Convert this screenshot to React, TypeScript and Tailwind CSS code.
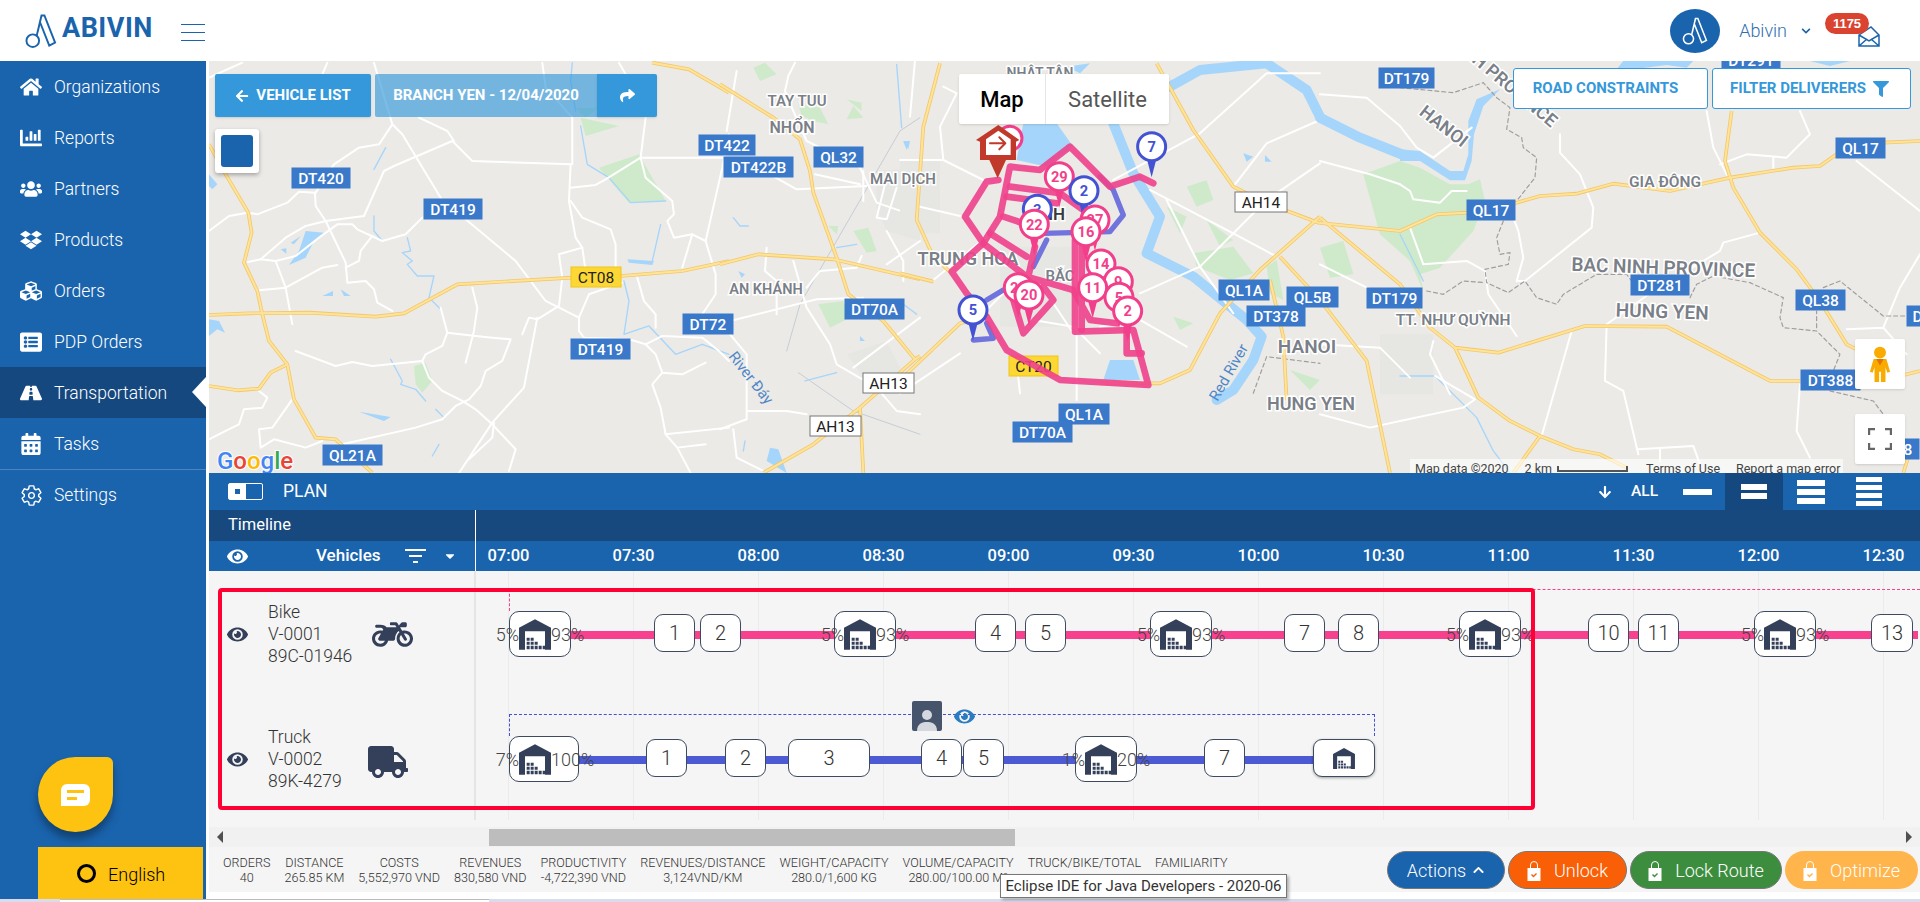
import {
  FaCalendarAlt,
  FaCaretDown,
  FaChartBar,
  FaChevronDown,
  FaChevronUp,
  FaCubes,
  FaDropbox,
  FaEye,
  FaFilter,
  FaHome,
  FaListAlt,
  FaMotorcycle,
  FaRoad,
  FaTruck,
  FaUsers,
  FaArrowLeft,
  FaArrowDown,
  FaShare,
} from "react-icons/fa";
import { IoSettingsOutline } from "react-icons/io5";

const navItems = [
  { label: "Organizations", icon: FaHome },
  { label: "Reports", icon: FaChartBar },
  { label: "Partners", icon: FaUsers },
  { label: "Products", icon: FaDropbox },
  { label: "Orders", icon: FaCubes },
  { label: "PDP Orders", icon: FaListAlt },
  { label: "Transportation", icon: FaRoad, active: true },
  { label: "Tasks", icon: FaCalendarAlt },
];

const stats = [
  ["ORDERS", "40"],
  ["DISTANCE", "265.85 KM"],
  ["COSTS", "5,552,970 VND"],
  ["REVENUES", "830,580 VND"],
  ["PRODUCTIVITY", "-4,722,390 VND"],
  ["REVENUES/DISTANCE", "3,124VND/KM"],
  ["WEIGHT/CAPACITY", "280.0/1,600 KG"],
  ["VOLUME/CAPACITY", "280.00/100.00 M³"],
  ["TRUCK/BIKE/TOTAL", "\u00a0"],
  ["FAMILIARITY", "\u00a0"],
];

const times = ["07:00", "07:30", "08:00", "08:30", "09:00", "09:30", "10:00", "10:30", "11:00", "11:30", "12:00", "12:30"];

// map layers, each drawn in the coordinates of the crop it was traced from
const layers = [
  {
    ox: 209,
    oy: 61,
    water: ["0,340 25,370 10,385 0,375", "290,510 345,515 315,540 290,590 240,612 270,570", "245,545 275,525 255,550", "215,565 232,562 232,578", "340,705 372,690 372,705", "395,685 425,705 405,705", "0,775 30,780 48,815 25,805 0,825", "450,1052 545,1068 525,1080", "1255,595 1335,600 1330,612 1260,605"],
    streams: ["M495 325 L530 260 M495 465 L495 510 L520 540 M595 530 L605 570 L580 575 L610 600 L595 610 L625 645 L675 645 L660 710 L695 745", "M545 895 L580 960 L575 970 L620 985 L650 1020 M680 1045 L705 1070 M690 1150 L670 1185", "M1115 195 L1135 310 L1200 350 L1265 425 L1370 420", "M1355 490 L1330 600 M1245 660 L1260 720 L1245 820 L1320 795 L1400 880 L1480 850 L1560 880", "M1090 5 L1085 60 L1100 150"],
    green: ["615,915 650,905 670,960 640,995 620,970", "1115,170 1230,195 1130,225", "1170,320 1290,280 1370,420 1260,425", "1100,140 1170,140 1130,170"],
    white: [
      "M0 510 L60 465 L115 455 L145 460 L235 425 L270 392 L318 395 L320 435 L350 480 L410 605 L415 665 L470 660 L495 685 L505 725 L550 750",
      "M155 595 L230 530 L290 495 L350 480 L465 465 L525 330 L555 315 L730 240 L790 300 L1085 310",
      "M100 5 L0 50 M355 5 L340 40 M495 5 L550 190 L510 250 L450 260 L375 310 L320 395 M550 190 L580 220 L695 410 M630 170 L715 210 L735 240",
      "M117 603 L155 595 L200 600 L260 585 L330 530 L385 490 L430 490 L445 505 L520 540 L590 520 L640 470",
      "M200 600 L230 680 L250 790 M150 688 L230 680 L340 620 L385 612 M490 525 L455 570 L450 600 L410 620",
      "M770 475 L920 600 L1010 720 L1110 770 L1140 700 L1240 665",
      "M790 680 L805 740 L795 810 L770 905 M715 815 L800 825 L850 830 L905 835 L880 900 L830 930 L815 975 L780 1015 L740 1035 L700 1075 L620 1100 L400 1150",
      "M260 870 L380 915 L430 903 L490 915 L640 900 L660 950 L700 990 L760 1020 L800 1045 L845 1085 L920 1165 L900 1230",
      "M640 900 L650 880 L700 855 L715 815 L695 740 M985 770 L945 980 L850 1085 L750 1236",
      "M940 820 L960 770 L985 775 L1050 735 L1060 650 L1050 580 L1120 560 L1130 630",
      "M1085 310 L1080 420 L1100 530 L1120 560 M1085 380 L1160 372 L1190 355 L1295 290 L1560 290 M1295 290 L1310 170",
      "M1295 290 L1310 350 L1390 420 L1395 460 L1375 480 L1395 530 L1450 520 L1490 540 L1540 320 L1560 220",
      "M1085 420 L1120 470 L1205 505 L1220 550 L1220 640 M1000 5 L1010 80 L1090 170 L1090 310 M1230 5 L1250 40",
      "M1490 540 L1520 640 L1520 700 L1480 760 M1450 520 L1420 620 M1110 770 L1110 810 L1125 830 L1260 835 L1310 850 L1360 825 L1480 830 L1530 870 L1560 900",
      "M1310 850 L1340 880 L1360 935 L1420 940 L1490 905 M1360 935 L1330 970 L1355 1040 L1370 1120 L1405 1160 L1490 1150 M1405 1160 L1445 1236",
      "M0 1135 L50 1110 L90 1090 L105 1045 L160 1040 L175 1010 L150 990 M150 1105 L190 1100 L250 1015 M150 1105 L155 1160 L195 1135 L290 1160 L340 1140",
      "M1285 650 L1305 720 L1340 760 L1340 800 M1370 1120 L1560 1100 M855 1085 L850 1130 L780 1195",
    ],
    yellow: [
      "M0 250 L50 340 L118 455 L128 515 L105 605 L145 690 L160 760 L180 840 L235 910 L255 1015 L320 1130 L380 1135 L490 1236",
      "M0 762 L120 757 L300 755 L500 767 L585 757 L745 670 L1090 650 L1235 645 L1420 630 L1560 600",
      "M0 975 L85 988 L150 983 L185 935 L235 910",
      "M1330 5 L1440 25 L1560 95",
    ],
    dashed: [],
  },
  {
    ox: 720,
    oy: 61,
    water: ["550,240 570,240 565,265", "150,1160 175,1165 200,1236 140,1200", "55,630 75,640 65,650", "420,825 435,840 420,840"],
    streams: ["M40 470 L60 495 L85 495 M75 1140 L70 1170 M530 10 L545 200 M255 960 L350 935 M350 560 L410 550 M550 730 L590 760"],
    green: ["100,20 135,5 170,40 120,60", "235,130 300,140 325,190 280,180 245,165", "380,115 425,125 425,150", "380,175 400,135 430,170", "400,510 445,500 470,570 440,575", "295,730 370,720 390,770 330,800", "325,495 355,495 350,520"],
    urban: ["470,330 600,320 600,540 500,510 470,440", "380,880 500,840 560,960 440,960"],
    white: [
      "M50 30 L20 210 M205 45 L225 5 M205 45 L195 90 L220 150 L260 240 L420 320 L470 425 L600 470",
      "M285 340 L420 370 M150 340 L230 385 L440 375 M430 330 L430 420 M495 370 L470 470 L500 475 L530 380 M500 510 L550 600 L550 660",
      "M140 560 L135 630 L170 660 L170 760 M30 780 L290 715 L430 710 M220 600 L260 740 L330 850 L350 910 L470 980 L530 1050 L600 1060",
      "M400 920 L600 770 M260 680 L300 630 L410 620 L425 585 M500 610 L600 540 M30 820 L80 880 L80 1075 L0 1105 M40 1105 L50 1190 L130 1230 M80 1050 L200 1050 L260 1060",
    ],
    rail: ["M200 870 L240 730 L540 210 L600 170", "M235 935 L400 1050 L600 1120"],
    yellow: [
      "M0 70 L160 170 L240 235 L270 330 L280 395 L350 590 L385 700 L490 780 L585 895",
      "M0 610 L115 580 L340 595 L600 655",
      "M130 1236 L280 1150 L420 1040 L585 895 L600 885",
      "M420 1040 L430 1236",
    ],
    dashed: [],
  },
  {
    ox: 900,
    oy: 60,
    water: ["370,190 470,190 520,260 440,320 350,300", "630,900 700,900 720,960 610,960", "10,245 25,245 20,270", "500,20 570,10 540,40", "1030,280 1060,290 1040,305", "1095,285 1115,305 1095,305"],
    river: ["M640 190 L700 340 L780 470 L740 580 L880 650 L1040 780 L1085 830 L1060 900 L1000 990 L950 1020", "M810 80 L900 30 L1100 10 L1220 90 L1260 170"],
    green: ["860,380 920,360 940,420 890,440", "880,580 1000,560 1060,640 990,660 890,620", "1100,620 1130,600 1150,720 1110,700", "800,440 860,470 840,520", "820,770 880,790 840,810", "920,480 1000,540 960,560", "1170,930 1260,960 1230,990"],
    urban: ["0,300 120,300 120,520 0,520", "300,560 560,560 560,800 300,800"],
    white: [
      "M0 300 L130 300 L190 330 L250 360 M130 300 L120 200 L170 100 L130 80 M190 470 L60 440 M100 660 L260 530 M210 800 L360 650 M0 1000 L180 880 M180 790 L100 870",
      "M350 910 L360 1000 M530 540 L530 1020 M400 780 L520 800 L600 880 M640 360 L900 220 L1100 40 L1260 40 M750 390 L1000 520 L1130 590",
      "M720 700 L900 620 L1100 420 L1260 310 M1000 380 L1100 250 L1260 180 M800 420 L900 620 L1000 760 M45 0 L30 170 M440 700 L520 820 M600 800 L720 780 L860 860",
    ],
    yellow: [
      "M120 10 L70 200 L50 480 L100 590 L155 640",
      "M0 640 L100 665",
      "M0 960 L180 790 L270 770",
      "M770 10 L880 210 L1000 380 L1100 430 L1260 490",
      "M1260 470 L1080 630 L960 760 L870 930 L780 970 L600 970",
      "M1140 590 L1260 720 M1110 660 L1150 830 L1160 1020",
    ],
    dashed: ["M1060 1000 L1100 890 L1260 910"],
  },
  {
    ox: 1400,
    oy: 61,
    water: ["0,265 60,270 150,330 190,330 205,280 205,180 230,115 300,85 250,135 222,220 215,300 195,358 150,358 60,300 0,300", "650,25 670,0 880,0 860,20 800,12 700,25", "1230,0 1350,0 1290,15"],
    river: ["M-240 170 L-120 230 L10 282"],
    streams: ["M0 520 L70 660 M0 945 L105 945 L230 1070 L280 1170 L330 1236"],
    green: ["-110,340 0,300 60,320 150,370 205,370 240,355 255,420 220,510 120,620 60,640 70,690 30,600 -60,520", "-240,560 -170,540 -140,640 -210,650"],
    urban: ["-60,820 100,820 100,1000 -60,1000"],
    white: [
      "M0 195 L50 260 L100 290 L215 200 M480 220 L480 275 L540 340 L580 440 L575 500 L375 660 L350 660 L370 590 L355 510 L340 470",
      "M1200 150 L1230 220 L1160 290 L1040 280 L960 310 M1120 290 L1120 320 M920 150 L940 260 L985 350 M1370 300 L1560 450",
      "M1080 515 L970 545 L960 570 L760 690 L620 790 L615 960 L670 990 L715 1180 M515 810 L425 1125 M1200 970 L1190 1110 L1230 1190",
      "M1340 805 L1450 800 L1520 880 M1450 800 L1500 680 L1560 580 M715 1165 L880 1155 L900 1210 M780 1165 L780 1200 M0 1080 L190 1040 L225 1015 L105 945",
      "M0 370 L30 390 L40 415 L120 425 L155 390 L200 390 M30 500 L70 610 L200 600 L255 630 L265 700 L350 825 M100 840 L90 880 L150 1000",
      "M-240 100 L-100 110 L0 195 M-240 300 L-90 340 L0 370 M-240 610 L-80 690 L30 720 M-240 850 L-60 860 L30 950 M-240 1060 L-90 1100 L0 1080",
    ],
    yellow: [
      "M-240 486 L0 510 L110 460 L200 455 L350 425 L420 405 L530 398 L640 368 L810 390 L990 350 L1180 320 L1260 315 L1310 280 L1450 245 L1560 240",
      "M995 150 L975 300 L1000 380 L1080 515 L1190 625 L1260 720 L1340 850 L1400 880",
      "M-240 470 L0 670 L90 800 L165 860 L295 875 L555 795 L800 797 L1110 960 L1200 960 M1500 945 L1560 930",
      "M165 860 L235 1010 L330 1080 L420 1125 L520 1165 L600 1180 L680 1220 M420 1125 L340 1236 M1540 1140 L1510 1236 M-240 717 L-100 900 L-30 1236",
    ],
    dashed: [
      "M0 80 L160 95 L250 65 L290 110 L330 140 L320 205 L365 230 L370 260 L410 290 L405 350 L350 420",
      "M310 480 L290 530 L300 580 L330 575 L325 610 L255 625 L260 665 L325 695 L375 660 L410 710 L470 730 L490 700 L590 640 L680 640 L695 660",
      "M870 710 L890 670 L940 645 L1050 665 L1150 710 L1140 770 L1150 800 L1250 810 L1320 880 L1300 930 M1250 800 L1250 750",
      "M1270 680 L1320 660 L1450 765 L1520 765 M1290 990 L1420 1020 L1450 1060 M80 690 L130 700 L190 660 L255 665",
    ],
  },
];

// x, y, w in page pixels
const shields: [string, number, number, number, string][] = [
  ["DT420", 292, 168, 58, "blue"],
  ["DT419", 424, 199, 58, "blue"],
  ["DT419", 571, 339, 59, "blue"],
  ["QL21A", 323, 445, 59, "blue"],
  ["DT72", 683, 314, 50, "blue"],
  ["DT422", 699, 135, 56, "blue"],
  ["DT422B", 724, 157, 69, "blue"],
  ["QL32", 814, 147, 49, "blue"],
  ["DT70A", 845, 299, 59, "blue"],
  ["DT70A", 1013, 422, 59, "blue"],
  ["QL1A", 1059, 404, 50, "blue"],
  ["QL1A", 1219, 280, 50, "blue"],
  ["QL5B", 1287, 287, 51, "blue"],
  ["DT378", 1247, 306, 58, "blue"],
  ["DT179", 1379, 68, 55, "blue"],
  ["DT179", 1367, 288, 55, "blue"],
  ["DT281", 1631, 275, 58, "blue"],
  ["QL17", 1467, 200, 48, "blue"],
  ["QL17", 1836, 138, 49, "blue"],
  ["QL38", 1796, 290, 49, "blue"],
  ["DT388", 1801, 370, 59, "blue"],
  ["DT388", 1860, 439, 59, "blue"],
  ["DT291", 1722, 50, 58, "blue"],
  ["DT", 1907, 306, 30, "blue"],
  ["AH13", 863, 373, 51, "white"],
  ["AH13", 810, 416, 51, "white"],
  ["AH14", 1235, 192, 52, "white"],
  ["CT08", 571, 267, 50, "yellow"],
  ["CT20", 1009, 356, 49, "yellow"],
];

// label, centre x, baseline y, size, rotation
const placeNames: [string, number, number, number, number][] = [
  ["TAY TUU", 797, 106, 15, 0],
  ["NHỔN", 792, 133, 16, 0],
  ["MAI DỊCH", 903, 184, 15, 0],
  ["AN KHÁNH", 766, 294, 14.5, 0],
  ["TRUNG HOA", 968, 265, 18, 0],
  ["BẮC", 1060, 281, 15, 0],
  ["NHẬT TÂN", 1040, 78, 14, 0],
  ["HANOI", 1307, 353, 19, 0],
  ["HUNG YEN", 1311, 410, 18, 0],
  ["GIA ĐÔNG", 1665, 187, 15.5, 0],
  ["BAC NINH PROVINCE", 1663, 274, 19, 2],
  ["HUNG YEN", 1662, 318, 19, 2],
  ["TT. NHƯ QUỲNH", 1453, 325, 15.5, 0],
  ["HANOI", 1440, 131, 18, 38],
  ["BAC NINH PROVINCE", 1484, 72, 18, 40],
  ["ĐÌNH", 1045, 220, 17, 0],
];

const pins: [string, number, number, string][] = [
  ["7", 755, 260, "#4352d3"],
  ["3", 412, 448, "#4352d3"],
  ["29", 478, 350, "#f23f8b"],
  ["2", 552, 392, "#4352d3"],
  ["27", 585, 480, "#f23f8b"],
  ["22", 403, 493, "#f23f8b"],
  ["16", 558, 515, "#f23f8b"],
  ["14", 603, 612, "#f23f8b"],
  ["9", 655, 665, "#f23f8b"],
  ["11", 578, 683, "#f23f8b"],
  ["5", 657, 712, "#f23f8b"],
  ["2", 683, 753, "#f23f8b"],
  ["23", 355, 683, "#f23f8b"],
  ["20", 387, 705, "#f23f8b"],
  ["5", 219, 750, "#4352d3"],
];

const bikeStops: [string, number, number][] = [
  ["1", 654, 41],
  ["2", 700, 41],
  ["4", 975, 41],
  ["5", 1025, 41],
  ["7", 1284, 41],
  ["8", 1338, 41],
  ["10", 1588, 41],
  ["11", 1638, 41],
  ["13", 1871, 42],
];

const bikeDepots = [509, 834, 1150, 1459, 1754];

const truckStops: [string, number, number][] = [
  ["1", 646, 41],
  ["2", 725, 41],
  ["3", 788, 82],
  ["4", 921, 41],
  ["5", 963, 41],
  ["7", 1204, 41],
];

const truckDepots: [number, number, string, string][] = [
  [509, 70, "7%", "100%"],
  [1075, 62, "1%", "20%"],
];

function AbivinMark({ className }: { className: string }) {
  return (
    <svg viewBox="0 0 34 36" fill="none" stroke="currentColor" strokeWidth="2" className={className}>
      <circle cx="8" cy="28" r="6.5" />
      <path d="M12 23 L17 2 L20 2 L31 30 L25 33 L15.5 9 M17 2 L13 19" />
    </svg>
  );
}

function Envelope() {
  return (
    <svg viewBox="0 0 22 21" fill="none" stroke="#1a64ae" strokeWidth="1.5" className="h-[21px] w-[22px]">
      <path d="M1 9 L13 1 L21 9 V20 H1 Z M1 9 L11 15 L21 9 M1 20 L9 13 M21 20 L13 13" />
    </svg>
  );
}

function Warehouse({ className }: { className: string }) {
  return (
    <svg viewBox="0 0 96 92" className={className}>
      <path fill="#34405a" d="M0 92V26L48 0 96 26V92H78V36H18V92Z" />
      <path
        fill="#34405a"
        d="M23 56h9v9h-9zM35 56h9v9h-9zM23 68h9v9h-9zM35 68h9v9h-9zM47 68h9v9h-9zM23 80h9v10h-9zM35 80h9v10h-9zM47 80h9v10h-9zM59 80h9v10h-9zM71 80h7v10h-7z"
      />
    </svg>
  );
}

function LockIcon({ check }: { check: string }) {
  return (
    <svg viewBox="0 0 14 21" className="h-[21px] w-[14px] shrink-0">
      <path d="M3.5 8 V5 a3.5 3.5 0 0 1 7 0 V8" fill="none" stroke="#fff" strokeWidth="1" />
      <rect x="0.5" y="8" width="13" height="13" fill="#fff" />
      <path d="M4.5 14.5 L6.5 16.5 L9.5 13.5" fill="none" stroke={check} strokeWidth="1.4" />
    </svg>
  );
}

function Bars({ count, size }: { count: number; size: string }) {
  return (
    <div className="flex w-[58px] flex-col items-center gap-[3px]">
      {Array.from({ length: count }).map((_, i) => (
        <span key={i} className={`block bg-white ${size}`} />
      ))}
    </div>
  );
}

function StopBox({ left, top, width, label }: { left: number; top: number; width: number; label: string }) {
  return (
    <div
      className="absolute z-10 flex h-[38px] items-center justify-center rounded-[9px] border border-[#3e4a60] bg-white text-[20px] font-light text-[#333]"
      style={{ left: left - 209, top, width }}
    >
      {label}
    </div>
  );
}

function DepotBox({ left, top, width, before, after }: { left: number; top: number; width: number; before: string; after: string }) {
  return (
    <div className="absolute z-10 flex h-[46px] items-center" style={{ left: left - 209, top, width }}>
      <div className="absolute inset-0 flex items-center rounded-[10px] border border-[#3e4a60] bg-white pl-[9px]">
        <Warehouse className="h-[31px] w-[32px]" />
      </div>
      <span className="absolute right-full mr-[-10px] text-[18px] font-light text-[#444]">{before}</span>
      <span className="absolute left-[42px] text-[18px] font-light text-[#444]">{after}</span>
    </div>
  );
}

function MapCanvas() {
  return (
    <svg viewBox="209 61 1711 412" className="absolute inset-0 h-full w-full">
      <rect x="209" y="61" width="1711" height="412" fill="#ebeae6" />
      {layers.map((l) => (
        <g key={l.ox} transform={`translate(${l.ox} ${l.oy}) scale(0.3333)`} fill="none" strokeLinejoin="round" strokeLinecap="round">
          {(l.urban ?? []).map((p) => <polygon key={p} points={p} fill="#e6e6e3" />)}
          {l.green.map((p) => <polygon key={p} points={p} fill="#cfeacb" />)}
          {l.water.map((p) => <polygon key={p} points={p} fill="#a6d5fb" />)}
          {(l.river ?? []).map((p) => <path key={p} d={p} stroke="#a6d5fb" strokeWidth="30" />)}
          {(l.streams ?? []).map((p) => <path key={p} d={p} stroke="#a6d5fb" strokeWidth="4" />)}
          {(l.rail ?? []).map((p) => <path key={p} d={p} stroke="#c5cdd6" strokeWidth="3" />)}
          {l.white.map((p) => <path key={p} d={p} stroke="#fff" strokeWidth="6" />)}
          {l.dashed.map((p) => <path key={p} d={p} stroke="#9e9e9e" strokeWidth="3.5" strokeDasharray="12 9" />)}
        </g>
      ))}
      {layers.map((l) => (
        <g key={l.ox} transform={`translate(${l.ox} ${l.oy}) scale(0.3333)`} fill="none" strokeLinejoin="round">
          {l.yellow.map((p) => <path key={p} d={p} stroke="#f6c766" strokeWidth="11" />)}
          {l.yellow.map((p) => <path key={p} d={p} stroke="#fde49c" strokeWidth="6" />)}
        </g>
      ))}

      {placeNames.map(([name, x, y, size, rot], i) => (
        <text
          key={i}
          x={x}
          y={y}
          fontSize={size}
          textAnchor="middle"
          transform={rot ? `rotate(${rot} ${x} ${y})` : undefined}
          stroke="#fff"
          strokeWidth="3"
          paintOrder="stroke"
          fill={name === "ĐÌNH" ? "#3a3a3a" : "#7a7f88"}
          className="font-semibold"
        >
          {name}
        </text>
      ))}
      <text x="1233" y="375" fontSize="15" fill="#4f86c6" textAnchor="middle" transform="rotate(-60 1233 375)">Red River</text>
      <text x="747" y="381" fontSize="15" fill="#4f86c6" textAnchor="middle" transform="rotate(52 747 381)">River Đáy</text>

      {shields.map(([text, x, y, w, kind], i) => (
        <g key={i}>
          <rect
            x={x}
            y={y}
            width={w}
            height={20}
            fill={kind === "blue" ? "#3a78c9" : kind === "white" ? "#fff" : "#fdd835"}
            stroke={kind === "white" ? "#777" : kind === "yellow" ? "#f0c419" : "#3a78c9"}
          />
          <text
            x={x + w / 2}
            y={y + 15.5}
            fontSize="15.5"
            textAnchor="middle"
            fill={kind === "blue" ? "#fff" : "#222"}
            className={kind === "blue" ? "font-medium" : "font-normal"}
          >
            {text}
          </text>
        </g>
      ))}

      <g transform="translate(900 60) scale(0.3333)" fill="none" strokeLinejoin="round" strokeLinecap="round">
        <path d="M220 840 L280 835 L260 790 M430 520 L630 515 L670 465 L640 390 L600 350 M260 720 L310 690 M440 540 L400 620" stroke="#5a5fd9" strokeWidth="16" opacity="0.85" />
        <path d="M295 360 L260 365 L195 470 L250 550 L155 635 L200 700 L260 770 L320 870 L480 960 L745 975 L700 810 L525 815 L525 540" stroke="#f0418b" strokeWidth="20" opacity="0.9" />
        <path d="M250 550 L300 470 L330 320 L420 330 L510 260 L630 380 L720 350 L760 370" stroke="#f0418b" strokeWidth="20" opacity="0.9" />
        <path d="M330 380 L480 400 L550 450 M320 410 L470 430 M310 470 L400 500 M270 520 L380 590 M250 550 L380 650 L520 690 M405 560 L385 650 L340 720 L370 820 L460 720 L430 680 M525 700 L570 780 L650 790 M680 810 L680 880 L725 880 M545 560 L545 810" stroke="#f0418b" strokeWidth="20" opacity="0.9" />

        <circle cx="330" cy="235" r="36" fill="#fff" stroke="#f23f8b" strokeWidth="9" />
        <path d="M228 240 L295 195 L358 240 L348 245 V300 H318 L293 355 L268 300 H240 V245 Z" fill="#c0392b" />
        <path d="M258 238 L295 212 L332 238 V285 H258 Z" fill="#fff" />
        <path d="M270 250 H315 M298 232 L316 250 L298 268" stroke="#c0392b" strokeWidth="6" />

        {pins.map(([label, cx, cy, color], i) => (
          <g key={i}>
            <polygon points={`${cx - 14},${cy + 38} ${cx + 14},${cy + 38} ${cx},${cy + 92}`} fill={color} />
            <circle cx={cx} cy={cy} r="42" fill="#fff" stroke={color} strokeWidth="9" />
            <text x={cx} y={cy + 16} fontSize="44" textAnchor="middle" fill={color} className="font-bold">
              {label}
            </text>
          </g>
        ))}
      </g>

      <text x="217" y="469" fontSize="24" stroke="#fff" strokeWidth="2" paintOrder="stroke" className="font-medium">
        <tspan fill="#4285f4">G</tspan>
        <tspan fill="#ea4335">o</tspan>
        <tspan fill="#fbbc05">o</tspan>
        <tspan fill="#4285f4">g</tspan>
        <tspan fill="#34a853">l</tspan>
        <tspan fill="#ea4335">e</tspan>
      </text>
    </svg>
  );
}

export default function App() {
  return (
    <div className="relative flex h-[902px] w-[1920px] flex-col overflow-hidden bg-white font-[family-name:Roboto,sans-serif]">
      <header className="flex h-[61px] shrink-0 items-center">
        <div className="ml-[25px] flex items-center text-[#1a64ae]">
          <AbivinMark className="h-[36px] w-[33px]" />
          <span className="ml-[4px] mt-[-5px] text-[27px] font-bold tracking-[0.5px]">ABIVIN</span>
        </div>
        <div className="ml-[28px] flex w-[24px] flex-col gap-[7px] pt-[3px]">
          <span className="block h-[1px] bg-[#1a64ae]" />
          <span className="block h-[1px] bg-[#1a64ae]" />
          <span className="block h-[1px] bg-[#1a64ae]" />
        </div>
        <div className="ml-auto flex items-center">
          <div className="flex h-[44px] w-[50px] items-center justify-center rounded-[50%] bg-[#1a64ae] text-white">
            <AbivinMark className="h-[28px] w-[27px]" />
          </div>
          <span className="ml-[19px] text-[18px] font-light text-[#2e6fb0]">Abivin</span>
          <FaChevronDown className="ml-[14px] h-[10px] w-[10px] text-[#1a64ae]" />
          <div className="relative ml-[31px] mr-[40px] mt-[12px] h-[21px] w-[38px] pl-[16px]">
            <Envelope />
            <span className="absolute left-[-17px] top-[-13px] flex h-[21px] w-[44px] items-center justify-center rounded-[11px] bg-[#d9432f] font-[family-name:'Liberation_Sans',sans-serif] text-[13px] font-bold text-white">
              1175
            </span>
          </div>
        </div>
      </header>

      <div className="flex h-[838px] shrink-0">
        <aside className="relative flex w-[206px] shrink-0 flex-col bg-[#1a64ae] text-white">
          {navItems.map(({ label, icon: Icon, active }) => (
            <div key={label} className={`relative flex h-[51px] items-center ${active ? "bg-[#15487f]" : ""}`}>
              <span className="flex w-[54px] justify-center pl-[8px]">
                <Icon className="h-[22px] w-[22px]" />
              </span>
              <span className="pt-[1px] text-[17.5px] font-light">{label}</span>
              {active && (
                <span className="absolute right-0 top-[10px] h-0 w-0 border-y-[15px] border-r-[14px] border-y-transparent border-r-white" />
              )}
            </div>
          ))}
          <div className="flex h-[52px] items-center border-t border-t-[#4a84bf]">
            <span className="flex w-[54px] justify-center pl-[8px]">
              <IoSettingsOutline className="h-[23px] w-[23px]" />
            </span>
            <span className="text-[17.5px] font-light">Settings</span>
          </div>
          <div className="mt-auto ml-[38px] flex h-[52px] w-[165px] items-center bg-[#fec310] pl-[39px] text-black">
            <span className="block h-[19px] w-[19px] rounded-full border-[3px] border-black" />
            <span className="ml-[12px] pt-[3px] text-[18px] font-light">English</span>
          </div>
          <div className="absolute left-[38px] top-[696px] flex h-[75px] w-[75px] items-center justify-center rounded-[50%_8%_50%_50%] bg-[#fec310] shadow-[0_7px_9px_rgba(0,0,0,0.35)]">
            <div className="flex h-[22px] w-[29px] flex-col justify-center gap-[4px] rounded-[6px] rounded-bl-none bg-white pl-[6px]">
              <span className="block h-[3px] w-[17px] bg-[#fec310]" />
              <span className="block h-[3px] w-[10px] bg-[#fec310]" />
            </div>
          </div>
        </aside>

        <main className="ml-[3px] flex min-w-0 flex-1 flex-col">
          <section className="relative h-[412px] shrink-0 overflow-hidden">
            <MapCanvas />
            <div className="absolute left-[6px] top-[13px] flex h-[43px] text-[15px] font-bold text-white">
              <div className="flex w-[156px] items-center justify-center gap-[7px] rounded-[2px] bg-[#3498db] shadow-sm">
                <FaArrowLeft className="h-[14px] w-[14px]" />
                VEHICLE LIST
              </div>
              <div className="ml-[4px] flex w-[222px] items-center justify-center rounded-l-[2px] bg-[#3498db]/65">BRANCH YEN - 12/04/2020</div>
              <div className="flex w-[60px] items-center justify-center rounded-r-[2px] bg-[#3498db] shadow-sm">
                <FaShare className="h-[15px] w-[15px]" />
              </div>
            </div>
            <div className="absolute left-[6px] top-[68px] flex h-[44px] w-[44px] items-center justify-center rounded-[3px] bg-white shadow-[0_2px_4px_rgba(0,0,0,0.3)]">
              <span className="block h-[32px] w-[32px] rounded-[3px] bg-[#1a64ae]" />
            </div>
            <div className="absolute left-[750px] top-[13px] flex h-[50px] w-[210px] rounded-[2px] bg-white text-[22px] shadow-sm">
              <div className="flex w-[87px] items-center justify-center border-r border-r-[#e6e6e6] font-medium text-black">Map</div>
              <div className="flex flex-1 items-center justify-center text-[#565656]">Satellite</div>
            </div>
            <div className="absolute left-[1304px] top-[7px] flex gap-[4px] text-[15px] font-bold text-[#3498db]">
              <div className="flex h-[41px] w-[195px] items-center justify-center rounded-[3px] border border-[#3498db] bg-white pr-[10px]">ROAD CONSTRAINTS</div>
              <div className="flex h-[41px] w-[199px] items-center justify-center gap-[7px] rounded-[3px] border border-[#3498db] bg-white pr-[4px]">
                FILTER DELIVERERS
                <FaFilter className="h-[16px] w-[16px]" />
              </div>
            </div>
            <div className="absolute left-[1646px] top-[278px] flex h-[50px] w-[50px] items-center justify-center rounded-[2px] bg-white shadow-sm">
              <svg viewBox="0 0 24 40" className="h-[37px] w-[22px]">
                <circle cx="12" cy="7" r="6.5" fill="#f9ab00" />
                <path d="M5 14 H19 L23 28 L20 29 L18 23 V39 H13 V28 H11 V39 H6 V23 L4 29 L1 28 Z" fill="#f9ab00" />
                <path d="M8 14 L12 21 L16 14 Z" fill="#e37400" />
              </svg>
            </div>
            <div className="absolute left-[1646px] top-[353px] flex h-[50px] w-[50px] items-center justify-center rounded-[2px] bg-white shadow-sm">
              <svg viewBox="0 0 24 22" fill="none" stroke="#666" strokeWidth="2.4" className="h-[22px] w-[24px]">
                <path d="M1 7 V1 H7 M17 1 H23 V7 M23 15 V21 H17 M7 21 H1 V15" />
              </svg>
            </div>
            <div className="absolute left-[1201px] top-[398px] flex h-[14px] w-[433px] gap-[16px] overflow-hidden bg-white/60 pl-[5px] text-[12.5px] leading-[20px] whitespace-nowrap text-[#444]">
              <span>Map data ©2020</span>
              <span className="flex gap-[5px]">
                2 km
                <span className="mt-[7px] block h-[6px] w-[71px] border-x-2 border-b-2 border-[#555]" />
              </span>
              <span className="ml-[2px]">Terms of Use</span>
              <span>Report a map error</span>
            </div>
          </section>

          <div className="flex h-[37px] shrink-0 items-center bg-[#1a64ae] pl-[19px] text-white">
            <div className="flex h-[17px] w-[35px] rounded-[2px] border border-white">
              <span className="flex w-[17px] items-center justify-center bg-white">
                <span className="block h-[5px] w-[5px] bg-[#1a64ae]" />
              </span>
            </div>
            <span className="ml-[20px] w-[45px] text-[17.5px]">PLAN</span>
            <FaArrowDown className="ml-[1270px] h-[14px] w-[14px]" />
            <span className="ml-[19px] text-[15.5px] font-medium">ALL</span>
            <span className="ml-[10px] flex w-[58px] justify-center"><span className="block h-[6px] w-[29px] bg-white" /></span>
            <div className="ml-[-1px] flex h-full w-[58px] items-center bg-[#15487f]">
              <Bars count={2} size="h-[6px] w-[26px]" />
            </div>
            <div className="ml-[-1px] flex h-full w-[58px] items-center">
              <Bars count={3} size="h-[6px] w-[28px]" />
            </div>
            <div className="flex h-full w-[58px] items-center">
              <div className="flex w-[58px] flex-col items-center gap-[3px]">
                <span className="block h-[5px] w-[26px] bg-white" />
                <span className="block h-[5px] w-[26px] bg-white" />
                <span className="block h-[5px] w-[26px] bg-white" />
                <span className="block h-[5px] w-[26px] bg-white" />
              </div>
            </div>
          </div>

          <div className="flex h-[31px] shrink-0 bg-[#18497e] text-white">
            <div className="flex w-[267px] items-center border-r border-r-white pl-[19px] text-[16.5px]">Timeline</div>
          </div>

          <div className="flex h-[30px] shrink-0 bg-[#1a64ae] text-white">
            <div className="flex w-[267px] shrink-0 items-center border-r border-r-white pl-[18px]">
              <FaEye className="h-[19px] w-[21px]" />
              <span className="ml-[68px] text-[17px] font-medium">Vehicles</span>
              <svg viewBox="0 0 21 14" stroke="#fff" strokeWidth="2" className="ml-[24px] h-[14px] w-[21px]">
                <path d="M0 1 H21 M4 7 H17 M8 13 H13" />
              </svg>
              <FaCaretDown className="ml-[18px] h-[14px] w-[12px]" />
            </div>
            <div className="flex items-center">
              {times.map((t) => (
                <span key={t} className="w-[125px] shrink-0 text-center text-[16.5px] font-medium first:ml-[-30px]">
                  {t}
                </span>
              ))}
            </div>
          </div>

          <section className="relative h-[249px] shrink-0 overflow-hidden bg-[#f5f5f5]">
            <span className="absolute inset-y-0 left-[265px] w-[2px] bg-[#e5e5e5]" />
            {times.map((t, i) => (
              <span key={t} className="absolute inset-y-0 w-px bg-[#ebebeb]" style={{ left: 299 + i * 125 }} />
            ))}

            {/* vehicle column */}
            <div className="absolute left-[18px] top-[28px] flex h-[70px] w-[230px] items-center text-[17.5px] font-light leading-[22px] text-[#333]">
              <FaEye className="h-[19px] w-[21px] text-[#34405a]" />
              <div className="ml-[20px] w-[104px]">
                <div>Bike</div>
                <div>V-0001</div>
                <div>89C-01946</div>
              </div>
              <FaMotorcycle className="h-[33px] w-[41px] text-[#34405a]" />
            </div>
            <div className="absolute left-[18px] top-[153px] flex h-[70px] w-[230px] items-center text-[17.5px] font-light leading-[22px] text-[#333]">
              <FaEye className="h-[19px] w-[21px] text-[#34405a]" />
              <div className="ml-[20px] w-[100px]">
                <div>Truck</div>
                <div>V-0002</div>
                <div>89K-4279</div>
              </div>
              <FaTruck className="mt-[6px] h-[32px] w-[40px] text-[#34405a]" />
            </div>

            {/* bike route */}
            <span className="absolute left-[300px] right-0 top-[18px] border-t border-dashed border-t-[#f7418f]" />
            <span className="absolute left-[300px] top-[18px] h-[22px] border-l border-dashed border-l-[#f7418f]" />
            <span className="absolute left-[361px] right-[2px] top-[60px] h-[8px] bg-[#f7418f]" />
            {bikeDepots.map((x) => (
              <DepotBox key={x} left={x} top={40} width={62} before="5%" after="93%" />
            ))}
            {bikeStops.map(([label, x, w]) => (
              <StopBox key={label} left={x} top={43} width={w} label={label} />
            ))}

            {/* truck route */}
            <span className="absolute left-[300px] top-[143px] h-[22px] w-[866px] border-x border-t border-dashed border-x-[#4352d3] border-t-[#4352d3]" />
            <span className="absolute left-[703px] top-[130px] flex h-[30px] w-[30px] items-end justify-center overflow-hidden rounded-[2px] bg-[#46546c]">
              <svg viewBox="0 0 20 22" fill="#d5d8de" className="h-[22px] w-[22px]">
                <circle cx="10" cy="6" r="5" />
                <path d="M0 22 C0 14 6 13 10 13 C14 13 20 14 20 22 Z" />
              </svg>
            </span>
            <FaEye className="absolute left-[745px] top-[136px] h-[19px] w-[21px] text-[#2a7bc0]" />
            <span className="absolute left-[369px] top-[185px] h-[8px] w-[736px] bg-[#4c5bd4]" />
            {truckDepots.map(([x, w, before, after]) => (
              <DepotBox key={x} left={x} top={165} width={w} before={before} after={after} />
            ))}
            {truckStops.map(([label, x, w]) => (
              <StopBox key={label} left={x} top={168} width={w} label={label} />
            ))}
            <div className="absolute left-[1104px] top-[168px] z-10 flex h-[38px] w-[62px] items-center justify-center rounded-[9px] border border-[#3e4a60] bg-white shadow-[0_1px_3px_rgba(0,0,0,0.35)]">
              <Warehouse className="h-[21px] w-[22px]" />
            </div>

            {/* annotation */}
            <div className="absolute left-[9px] top-[17px] z-20 h-[222px] w-[1317px] rounded-[4px] border-4 border-[#ff0035]" />
          </section>

          <div className="h-[7px] shrink-0 bg-[#f5f5f5]" />

          <div className="relative flex h-[20px] shrink-0 items-center bg-[#f1f1f1]">
            <span className="ml-[8px] h-0 w-0 border-y-[6px] border-r-[6px] border-y-transparent border-r-[#505050]" />
            <span className="absolute left-[280px] top-[2px] h-[17px] w-[526px] bg-[#bdbdbd]" />
            <span className="ml-auto mr-[8px] h-0 w-0 border-y-[6px] border-l-[6px] border-y-transparent border-l-[#505050]" />
          </div>

          <div className="relative flex h-[45px] shrink-0 items-center bg-[#f5f5f5] pl-[14px] text-[12.6px] font-light leading-[15px] text-[#333]">
            <div className="flex gap-[14px]">
              {stats.map(([k, v]) => (
                <div key={k} className="text-center whitespace-nowrap">
                  <div>{k}</div>
                  <div>{v}</div>
                </div>
              ))}
            </div>
            <div className="absolute right-[2px] top-[4px] flex gap-[3px] text-[18px] text-white">
              <div className="flex h-[38px] w-[118px] items-center justify-center gap-[6px] rounded-[19px] border border-[#777] bg-[#1a64ae]">
                Actions
                <FaChevronUp className="h-[12px] w-[13px]" />
              </div>
              <div className="flex h-[38px] w-[119px] items-center justify-center gap-[13px] rounded-[19px] border border-[#777] bg-[#f95f07]">
                <LockIcon check="#f95f07" />
                Unlock
              </div>
              <div className="flex h-[38px] w-[152px] items-center justify-center gap-[13px] rounded-[19px] border border-[#777] bg-[#3c8e3e]">
                <LockIcon check="#3c8e3e" />
                Lock Route
              </div>
              <div className="flex h-[38px] w-[133px] items-center justify-center gap-[13px] rounded-[19px] bg-[#ffb54c]">
                <LockIcon check="#ffb54c" />
                Optimize
              </div>
            </div>
          </div>
        </main>
      </div>

      <div className="mt-auto flex h-[3px] shrink-0 bg-[#d8dcec]">
        <span className="ml-[60px] block h-full w-[429px] border-t border-t-[#bbb] bg-white" />
      </div>

      <div className="absolute left-[1000px] top-[874px] z-30 flex h-[24px] w-[287px] items-center justify-center border border-[#777] bg-white text-[15px] whitespace-nowrap text-[#333] shadow-[2px_2px_3px_rgba(0,0,0,0.3)]">
        Eclipse IDE for Java Developers - 2020-06
      </div>
    </div>
  );
}
